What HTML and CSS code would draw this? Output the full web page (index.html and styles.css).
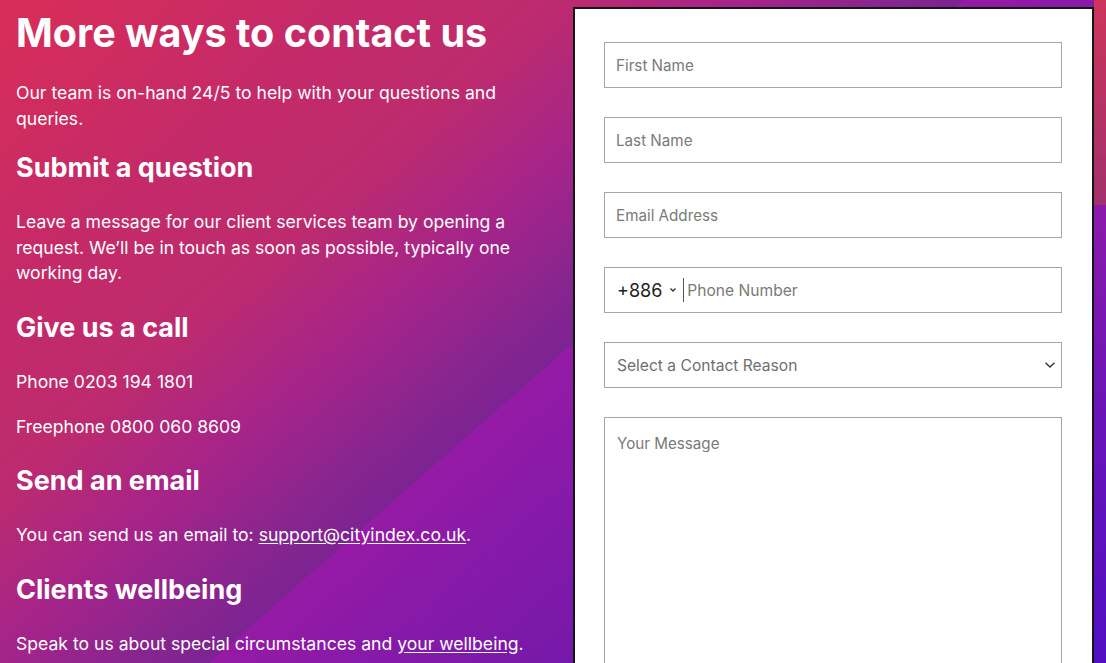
FILE: index.html
```html
<!DOCTYPE html>
<html lang="en">
<head>
<meta charset="utf-8">
<title>Contact us</title>
<link rel="stylesheet" href="styles.css">
</head>
<body>
<div class="page">
  <section class="info">
    <h1 class="title">More ways to contact us</h1>
    <p class="text intro">Our team is on-hand 24/5 to help with your questions and queries.</p>

    <h2 class="sub">Submit a question</h2>
    <p class="text">Leave a message for our client services team by opening a request. We’ll be in touch as soon as possible, typically one working day.</p>

    <h2 class="sub">Give us a call</h2>
    <p class="text tight">Phone 0203 194 1801</p>
    <p class="text">Freephone 0800 060 8609</p>

    <h2 class="sub">Send an email</h2>
    <p class="text">You can send us an email to: <a class="link" href="#">support@cityindex.co.uk</a>.</p>

    <h2 class="sub">Clients wellbeing</h2>
    <p class="text">Speak to us about special circumstances and <a class="link" href="#">your wellbeing</a>.</p>
  </section>

  <section class="panel">
    <form class="form">
      <input class="field" type="text" placeholder="First Name">
      <input class="field" type="text" placeholder="Last Name">
      <input class="field" type="email" placeholder="Email Address">
      <div class="field phone">
        <span class="code">+886</span>
        <svg class="mini-chev" width="8" height="6" viewBox="0 0 8 6"><path d="M1.5 1.5 L4 4 L6.5 1.5" fill="none" stroke="#333" stroke-width="1.3"/></svg>
        <span class="sep"></span>
        <input class="phone-input" type="tel" placeholder="Phone Number">
      </div>
      <div class="field select">
        <span class="select-text">Select a Contact Reason</span>
        <svg class="chev" width="12" height="8" viewBox="0 0 12 8"><path d="M1.5 1.8 L6 6 L10.5 1.8" fill="none" stroke="#333" stroke-width="1.4"/></svg>
      </div>
      <textarea class="field message" placeholder="Your Message"></textarea>
    </form>
  </section>
</div>
</body>
</html>
```

FILE: styles.css
```css
html, body {
  margin: 0;
  padding: 0;
  height: 663px;
  overflow: hidden;
}
body {
  font-family: Inter, "Liberation Sans", sans-serif;
  color: #fff;
  background-color: #7c2392;
  background-image:
    linear-gradient(180deg, #cc355c 0%, #a4306c 100%),
    linear-gradient(180deg, #8c1aaa 0%, #6a14b8 45%, #5010c2 100%),
    linear-gradient(138.7deg, rgba(0,0,0,0) 51.8%, #951aa5 51.8%, #8a1aa8 58%, #7418aa 72%, #6414b4 100%),
    linear-gradient(138.7deg, #d92d58 0%, #c52a68 18%, #bd2b6e 30%, #a5248a 40%, #86258f 48%, #7c2392 51.8%);
  background-repeat: no-repeat;
  background-size: 12px 205px, 12px 458px, 100% 100%, 100% 100%;
  background-position: right top, right bottom, 0 0, 0 0;
}
.page {
  display: flex;
  align-items: flex-start;
  height: 663px;
}
.info {
  width: 573px;
  padding: 10px 0 0 16px;
  box-sizing: border-box;
  flex: none;
}
.title {
  font-size: 39.5px;
  line-height: 46px;
  font-weight: 700;
  margin: 0 0 24px;
}
.text {
  font-size: 17.6px;
  line-height: 25.5px;
  margin: 0 0 25px;
  font-weight: 400;
  max-width: 525px;
}
.intro { margin-bottom: 20px; }
.tight { margin-bottom: 19.5px; }
.sub {
  font-size: 27px;
  line-height: 34px;
  font-weight: 700;
  margin: 0 0 24px;
}
.link {
  color: #fff;
  text-decoration: underline;
  text-underline-offset: 2px;
}
.panel {
  flex: none;
  width: 521px;
  margin: 7px 0 0 0;
  height: 700px;
  background: #fff;
  border: 2px solid #161616;
  box-sizing: border-box;
  padding: 33px 30px 0 29px;
}
.form {
  display: flex;
  flex-direction: column;
  gap: 29px;
}
.field {
  box-sizing: border-box;
  height: 46px;
  width: 100%;
  border: 1.5px solid #a6a6a6;
  background: #fff;
  font-family: Inter, "Liberation Sans", sans-serif;
  font-size: 15.2px;
  color: #333;
  padding: 0 11px;
  outline: none;
  border-radius: 0;
}
.field::placeholder, .phone-input::placeholder { color: #7a7a7a; }
.phone {
  display: flex;
  align-items: center;
  padding-left: 12px;
}
.code {
  font-size: 18px;
  color: #222;
}
.mini-chev { margin: 0 6px 0 7px; }
.sep {
  width: 1px;
  height: 24px;
  background: #555;
  margin-right: 3px;
}
.phone-input {
  border: none;
  outline: none;
  font-family: Inter, "Liberation Sans", sans-serif;
  font-size: 15.6px;
  padding: 0;
  flex: 1;
  height: 30px;
}
.select {
  display: flex;
  align-items: center;
  justify-content: space-between;
  padding: 0 5px 0 12px;
  font-size: 15.6px;
}
.select-text { color: #6f6f6f; }
.message {
  height: 300px;
  padding: 17px 12px;
  line-height: 18px;
  resize: none;
}
```
